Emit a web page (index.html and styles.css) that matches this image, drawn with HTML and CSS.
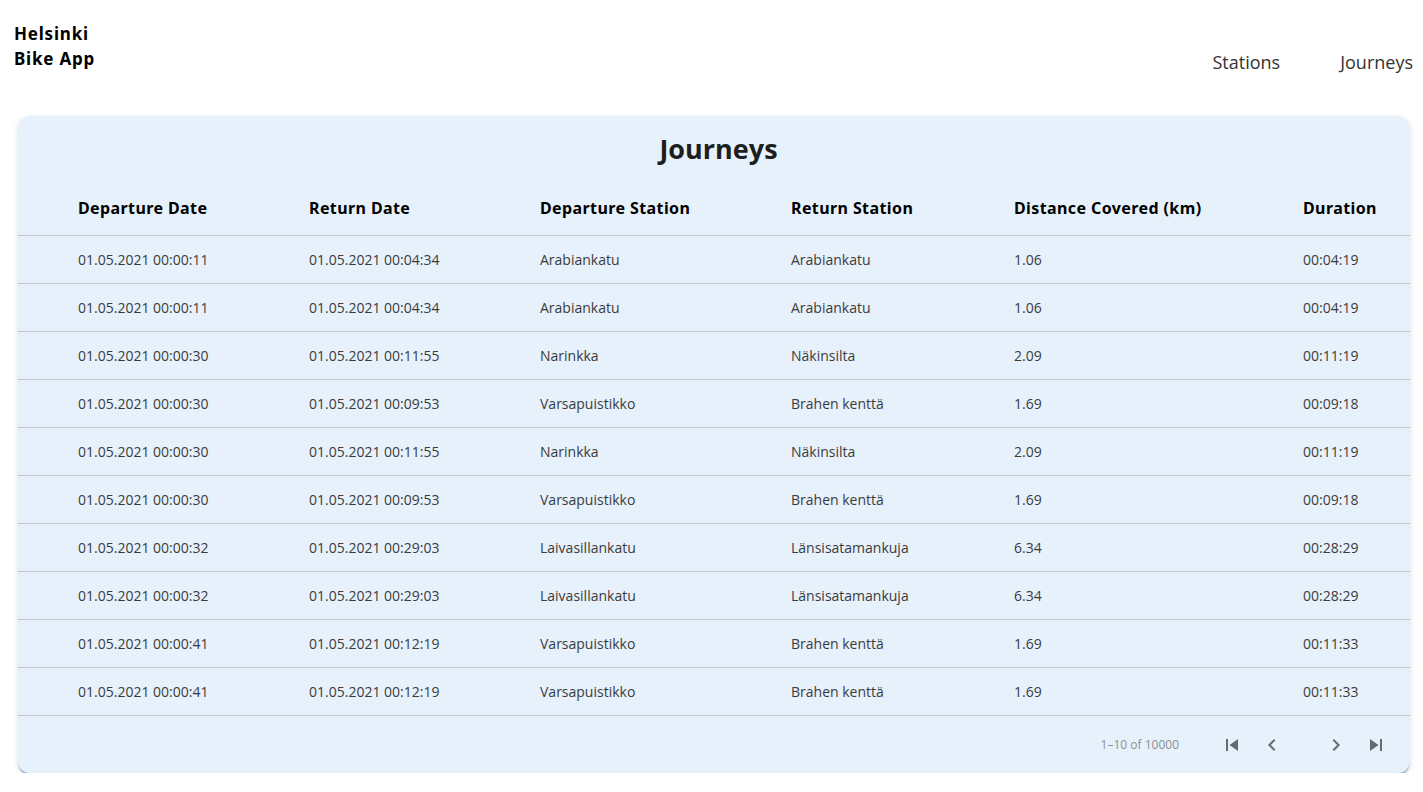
FILE: index.html
```html
<!DOCTYPE html>
<html>
<head>
<meta charset="utf-8">
<link rel="stylesheet" href="styles.css">
</head>
<body>
<header class="topbar">
  <div class="brand">Helsinki<br>Bike App</div>
  <nav class="nav">
    <a class="nav-link">Stations</a>
    <a class="nav-link">Journeys</a>
  </nav>
</header>
<main class="content">
  <section class="card">
    <h1 class="card-title">Journeys</h1>
    <table class="table">
      <colgroup>
        <col class="c1"><col class="c2"><col class="c3"><col class="c4"><col class="c5"><col class="c6">
      </colgroup>
      <thead>
        <tr><th>Departure Date</th><th>Return Date</th><th>Departure Station</th><th>Return Station</th><th>Distance Covered (km)</th><th>Duration</th></tr>
      </thead>
      <tbody>
        <tr><td>01.05.2021 00:00:11</td><td>01.05.2021 00:04:34</td><td>Arabiankatu</td><td>Arabiankatu</td><td>1.06</td><td>00:04:19</td></tr>
        <tr><td>01.05.2021 00:00:11</td><td>01.05.2021 00:04:34</td><td>Arabiankatu</td><td>Arabiankatu</td><td>1.06</td><td>00:04:19</td></tr>
        <tr><td>01.05.2021 00:00:30</td><td>01.05.2021 00:11:55</td><td>Narinkka</td><td>Näkinsilta</td><td>2.09</td><td>00:11:19</td></tr>
        <tr><td>01.05.2021 00:00:30</td><td>01.05.2021 00:09:53</td><td>Varsapuistikko</td><td>Brahen kenttä</td><td>1.69</td><td>00:09:18</td></tr>
        <tr><td>01.05.2021 00:00:30</td><td>01.05.2021 00:11:55</td><td>Narinkka</td><td>Näkinsilta</td><td>2.09</td><td>00:11:19</td></tr>
        <tr><td>01.05.2021 00:00:30</td><td>01.05.2021 00:09:53</td><td>Varsapuistikko</td><td>Brahen kenttä</td><td>1.69</td><td>00:09:18</td></tr>
        <tr><td>01.05.2021 00:00:32</td><td>01.05.2021 00:29:03</td><td>Laivasillankatu</td><td>Länsisatamankuja</td><td>6.34</td><td>00:28:29</td></tr>
        <tr><td>01.05.2021 00:00:32</td><td>01.05.2021 00:29:03</td><td>Laivasillankatu</td><td>Länsisatamankuja</td><td>6.34</td><td>00:28:29</td></tr>
        <tr><td>01.05.2021 00:00:41</td><td>01.05.2021 00:12:19</td><td>Varsapuistikko</td><td>Brahen kenttä</td><td>1.69</td><td>00:11:33</td></tr>
        <tr><td>01.05.2021 00:00:41</td><td>01.05.2021 00:12:19</td><td>Varsapuistikko</td><td>Brahen kenttä</td><td>1.69</td><td>00:11:33</td></tr>
      </tbody>
    </table>
    <div class="pagination">
      <span class="page-info">1–10 of 10000</span>
      <div class="page-buttons">
        <button class="page-btn"><svg viewBox="0 0 24 24"><path d="M6 6h2v12H6zm3.5 6l8.5 6V6z"/></svg></button>
        <button class="page-btn"><svg viewBox="0 0 24 24"><path d="M15.41 16.59L10.83 12l4.58-4.59L14 6l-6 6 6 6 1.41-1.41z"/></svg></button>
        <button class="page-btn gap"><svg viewBox="0 0 24 24"><path d="M8.59 16.59L13.17 12 8.59 7.41 10 6l6 6-6 6-1.41-1.41z"/></svg></button>
        <button class="page-btn"><svg viewBox="0 0 24 24"><path d="M6 18l8.5-6L6 6v12zM16 6v12h2V6h-2z"/></svg></button>
      </div>
    </div>
  </section>
</main>
</body>
</html>
```

FILE: styles.css
```css
* { box-sizing: border-box; }
html, body { margin: 0; padding: 0; background: #fff; }
body { font-family: "Open Sans", "Noto Sans", sans-serif; color: #222; }

.topbar {
  display: flex;
  justify-content: space-between;
  align-items: flex-start;
  padding: 21px 10px 0 14px;
  height: 116px;
}
.brand {
  font-family: "Noto Sans", "Open Sans", sans-serif;
  font-weight: 700;
  font-size: 17px;
  letter-spacing: 0.8px;
  line-height: 25px;
  color: #000;
}
.nav {
  display: flex;
  gap: 60px;
  padding-top: 28px;
}
.nav-link {
  font-size: 18px;
  line-height: 26px;
  color: #333;
  text-decoration: none;
}

.content { padding: 0 13px 0 18px; }

.card {
  background: #e7f1fb;
  border-radius: 12px;
  box-shadow: 0 3px 2px -1px rgba(70, 125, 175, 0.6), 0 2px 6px rgba(0, 0, 0, 0.12);
  overflow: hidden;
}
.card-title {
  margin: 0;
  text-align: center;
  font-size: 27px;
  font-weight: 700;
  line-height: 38px;
  padding: 14px 0 0 9px;
  color: #1e1e1e;
}

.table {
  width: 100%;
  border-collapse: collapse;
  table-layout: fixed;
}
.c1 { width: 275px; }
.c2 { width: 231px; }
.c3 { width: 251px; }
.c4 { width: 223px; }
.c5 { width: 289px; }
.c6 { width: 123px; }

.table th {
  font-family: "Noto Sans", "Open Sans", sans-serif;
  text-align: left;
  font-size: 16px;
  font-weight: 700;
  letter-spacing: 0.4px;
  color: #000;
  padding: 30px 16px 16px;
  line-height: 21px;
  border-bottom: 1px solid #c3c6d1;
  white-space: nowrap;
}
.table td {
  font-size: 14px;
  color: #3b3b3b;
  padding: 0 16px;
  height: 48px;
  line-height: 20px;
  border-bottom: 1px solid #c3c6d1;
  white-space: nowrap;
}
.table th:first-child, .table td:first-child { padding-left: 60px; }

.pagination {
  display: flex;
  justify-content: flex-end;
  align-items: center;
  height: 57px;
  padding-right: 22px;
}
.page-info {
  font-size: 12px;
  color: #8a8f96;
  margin-right: 41px;
}
.page-buttons { display: flex; gap: 16px; }
.page-btn {
  width: 24px;
  height: 24px;
  padding: 0;
  border: 0;
  background: transparent;
  display: flex;
}
.page-btn svg { width: 24px; height: 24px; fill: #666a70; }
.page-btn.gap { margin-left: 24px; }
```
